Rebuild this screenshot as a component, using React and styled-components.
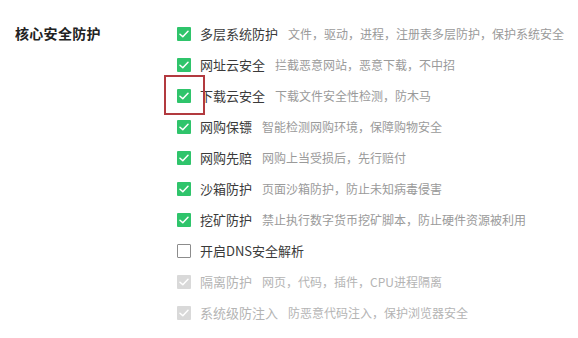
import React from "react";
import styled, { createGlobalStyle } from "styled-components";

const Global = createGlobalStyle`
  html, body { margin: 0; padding: 0; background: #fff; }
  body { font-family: "Noto Sans CJK SC", "Noto Sans", sans-serif; }
`;

const Page = styled.div`
  width: 578px;
  height: 338px;
  background: #fff;
  position: relative;
  overflow: hidden;
`;

const Section = styled.div`
  display: flex;
  padding-top: 18px;
`;

const Title = styled.div`
  width: 162px;
  padding-left: 15px;
  font-size: 14px;
  font-weight: bold;
  color: #222;
  line-height: 31px;
  height: 31px;
  flex-shrink: 0;
  letter-spacing: 0.3px;
`;

const List = styled.div`
  display: flex;
  flex-direction: column;
`;

const Row = styled.div`
  display: flex;
  align-items: center;
  height: 31px;
  white-space: nowrap;
`;

const Box = styled.span`
  width: 14px;
  height: 14px;
  box-sizing: border-box;
  border-radius: 1px;
  display: inline-flex;
  align-items: center;
  justify-content: center;
  margin-right: 9px;
  flex-shrink: 0;
  background: ${(p) =>
    p.$state === "on" ? "#2fc46b" : p.$state === "disabled" ? "#d9d9d9" : "#fff"};
  border: ${(p) => (p.$state === "off" ? "1px solid #8c8c8c" : "none")};
`;

const Label = styled.span`
  font-size: 13px;
  color: ${(p) => (p.$disabled ? "#b4b4b4" : "#3a3a3a")};
  margin-right: 10px;
`;

const Desc = styled.span`
  font-size: 12px;
  color: ${(p) => (p.$disabled ? "#b4b4b4" : "#9a9a9a")};
`;

const Highlight = styled.div`
  position: absolute;
  left: 164px;
  top: 75px;
  width: 41px;
  height: 40px;
  box-sizing: border-box;
  border: 2px solid #b23a3f;
  pointer-events: none;
`;

const Check = () => (
  <svg width="10" height="8" viewBox="0 0 10 8">
    <path d="M1 4.2 L3.8 6.8 L9 1.3" fill="none" stroke="#fff" strokeWidth="1.5" strokeLinecap="round" strokeLinejoin="round" />
  </svg>
);

const items = [
  { l: "多层系统防护", d: "文件，驱动，进程，注册表多层防护，保护系统安全", s: "on" },
  { l: "网址云安全", d: "拦截恶意网站，恶意下载，不中招", s: "on" },
  { l: "下载云安全", d: "下载文件安全性检测，防木马", s: "on" },
  { l: "网购保镖", d: "智能检测网购环境，保障购物安全", s: "on" },
  { l: "网购先赔", d: "网购上当受损后，先行赔付", s: "on" },
  { l: "沙箱防护", d: "页面沙箱防护，防止未知病毒侵害", s: "on" },
  { l: "挖矿防护", d: "禁止执行数字货币挖矿脚本，防止硬件资源被利用", s: "on" },
  { l: "开启DNS安全解析", d: "", s: "off" },
  { l: "隔离防护", d: "网页，代码，插件，CPU进程隔离", s: "disabled" },
  { l: "系统级防注入", d: "防恶意代码注入，保护浏览器安全", s: "disabled" },
];

export default function App() {
  return (
    <Page>
      <Global />
      <Section>
        <Title>核心安全防护</Title>
        <List>
          {items.map((it) => (
            <Row key={it.l}>
              <Box $state={it.s}>{it.s !== "off" && <Check />}</Box>
              <Label $disabled={it.s === "disabled"}>{it.l}</Label>
              {it.d && <Desc $disabled={it.s === "disabled"}>{it.d}</Desc>}
            </Row>
          ))}
        </List>
      </Section>
      <Highlight />
    </Page>
  );
}
